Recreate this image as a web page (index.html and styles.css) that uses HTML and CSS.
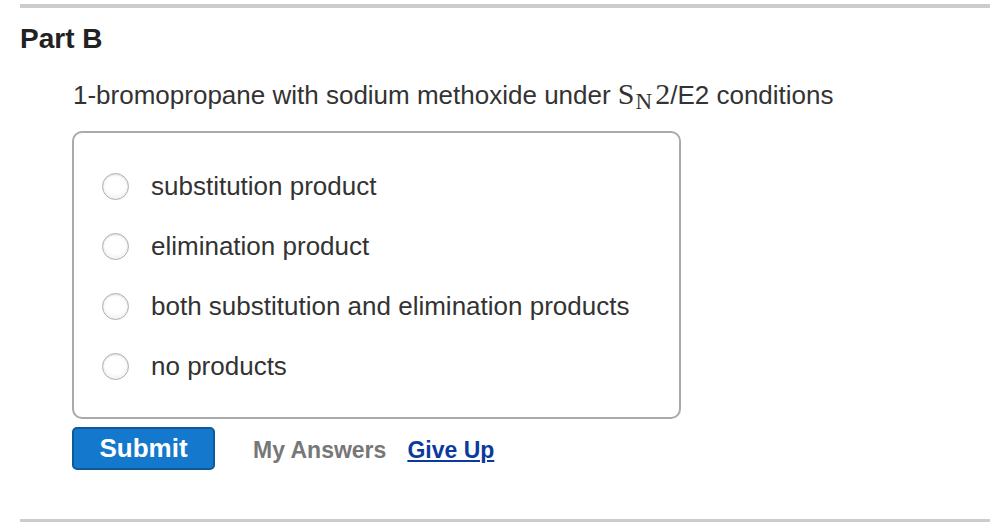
FILE: index.html
```html
<!DOCTYPE html>
<html lang="en">
<head>
  <meta charset="UTF-8" />
  <title>Part B</title>
  <link rel="stylesheet" href="styles.css">
</head>
<body>

  <div class="rule rule-top"></div>

  <div class="part">
    <h2>Part B</h2>

    <p class="question">
      1-bromopropane with sodium methoxide under
      <span class="math"><span class="math-s">S</span><span class="math-sub">N</span><span class="math-2">2</span></span>/E2 conditions
    </p>

    <!-- Answer choices -->
    <div class="choices">
      <label class="choice">
        <span class="radio"></span>
        <span class="choice-text">substitution product</span>
      </label>
      <label class="choice">
        <span class="radio"></span>
        <span class="choice-text">elimination product</span>
      </label>
      <label class="choice">
        <span class="radio"></span>
        <span class="choice-text">both substitution and elimination products</span>
      </label>
      <label class="choice">
        <span class="radio"></span>
        <span class="choice-text">no products</span>
      </label>
    </div>

    <div class="actions">
      <button class="submit">Submit</button>
      <span class="my-answers">My Answers</span>
      <a href="#" class="give-up">Give Up</a>
    </div>
  </div>

  <div class="rule rule-bottom"></div>

</body>
</html>
```

FILE: styles.css
```css
* {
  box-sizing: border-box;
  margin: 0;
  padding: 0;
}

body {
  font-family: 'Liberation Sans', Arial, sans-serif;
  background: #fff;
  color: #333;
  padding-top: 4px;
}

.rule {
  height: 4px;
  margin-left: 20px;
  background: #cccccc;
}

.part {
  padding-left: 20px;
}

.part h2 {
  margin-top: 14px;
  font-size: 28px;
  line-height: 34px;
  font-weight: bold;
  color: #222;
}

.question {
  margin: 21px 0 0 53px;
  font-size: 26px;
  line-height: 34px;
  color: #333;
}

.math {
  font-family: 'Liberation Serif', 'Times New Roman', serif;
  color: #333;
}

.math-s,
.math-2 {
  font-size: 30px;
}

.math-sub {
  font-size: 23px;
  position: relative;
  top: 5px;
  margin-left: 1px;
}

.math-2 {
  margin-left: 3px;
}

.choices {
  margin: 17px 0 0 52px;
  width: 609px;
  border: 2px solid #aaaaaa;
  border-radius: 10px;
  padding: 23px 0 21px 28px;
}

.choice {
  display: flex;
  align-items: center;
  height: 60px;
  font-size: 26px;
  line-height: 60px;
  color: #333;
  cursor: pointer;
}

.radio {
  flex: none;
  width: 27px;
  height: 27px;
  border-radius: 50%;
  border: 1px solid #b0b0b0;
  background: radial-gradient(circle at 50% 35%, #ffffff 50%, #e8e8e8 100%);
  box-shadow: inset 0 1px 2px rgba(0, 0, 0, 0.15);
  margin-right: 22px;
}

.actions {
  display: flex;
  align-items: center;
  margin: 8px 0 0 52px;
  height: 43px;
}

.submit {
  width: 143px;
  height: 43px;
  border: 2px solid #0c5a98;
  border-radius: 5px;
  background: #1479cc;
  color: #fff;
  font-family: 'Liberation Sans', Arial, sans-serif;
  font-size: 26px;
  font-weight: bold;
  line-height: 39px;
  padding-bottom: 1px;
  cursor: pointer;
}

.my-answers {
  margin-left: 38px;
  font-size: 23px;
  font-weight: bold;
  color: #777;
  padding-top: 3px;
}

.give-up {
  margin-left: 21px;
  font-size: 23px;
  font-weight: bold;
  color: #0c3a9c;
  text-decoration: underline;
  padding-top: 3px;
}

.rule-bottom {
  margin-top: 49px;
}
```
